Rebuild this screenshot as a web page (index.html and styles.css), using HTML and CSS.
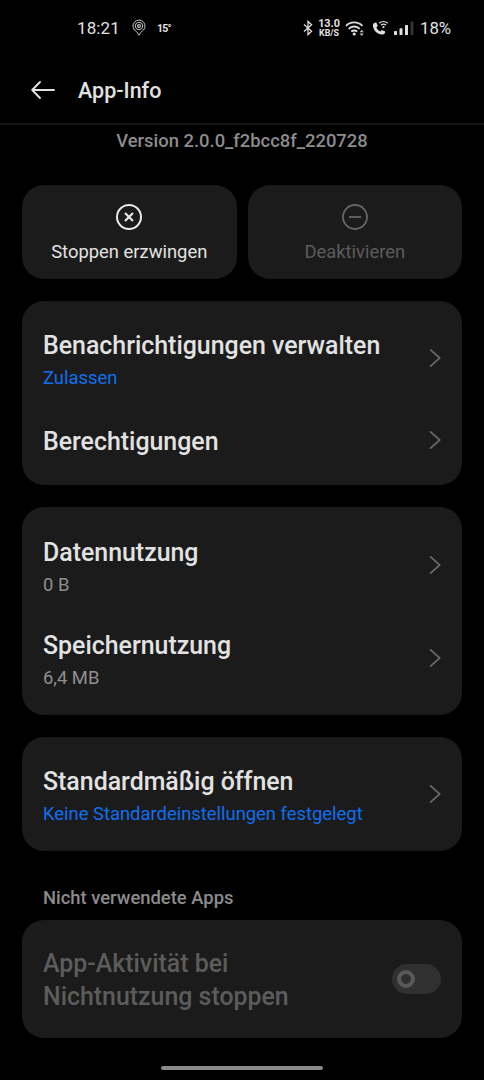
FILE: index.html
```
<!DOCTYPE html>
<html lang="de">
<head>
    <meta charset="UTF-8">
    <meta name="viewport" content="width=device-width, initial-scale=1.0">
    <title>App-Info</title>

    <link rel="stylesheet" href="styles.css">
</head>
<body>
    <div class="statusbar">
        <span class="time">18:21</span>
        <svg class="icon-location" width="14" height="18" viewBox="0 0 14 18" fill="none" stroke="#c4c4c4">
            <path d="M4.6 12.6A6 6 0 1 1 9.4 12.6L7 16.2Z" stroke-width="1"/>
            <circle cx="7" cy="7" r="3.7" stroke-width="1"/>
            <circle cx="7" cy="7" r="1.4" stroke-width="1.2"/>
        </svg>
        <span class="temp">15°</span>

        <div class="status-right">
            <svg class="icon-bt" width="10" height="16" viewBox="0 0 10 16" fill="none" stroke="#dedede" stroke-width="1.3">
                <path d="M1 4.5L8.6 11.3L5 14.6V1.4L8.6 4.7L1 11.5"/>
            </svg>
            <div class="speed">
                <span>13.0</span>
                <span class="unit">KB/S</span>
            </div>
            <svg class="icon-wifi" width="21" height="17" viewBox="0 0 21 17" fill="none" stroke="#dedede" stroke-width="1.9">
                <path d="M1 5.8A11.6 11.6 0 0 1 17.4 5.8"/>
                <path d="M3.7 8.8A7.8 7.8 0 0 1 14.7 8.8"/>
                <path d="M6.3 11.7A4.1 4.1 0 0 1 12.1 11.7"/>
                <circle cx="9.2" cy="14" r="1.6" fill="#dedede" stroke="none"/>
                <path d="M14.6 12.2L16.7 9.8L18.8 12.2ZM14.6 13.5L16.7 15.9L18.8 13.5Z" fill="#bdbdbd" stroke="none"/>
            </svg>
            <svg class="icon-call" width="17" height="16" viewBox="0 0 17 16">
                <path d="M1.4 3.6L3.6 2.5Q4.3 2.3 4.6 3L5.6 5.5Q5.8 6.2 5.2 6.7L4.3 7.5Q5.5 10.1 8.2 11.4L9.2 10.4Q9.7 9.9 10.4 10.2L12.8 11.3Q13.5 11.7 13.2 12.4Q12.2 14.8 9.6 14.6Q2.9 13.7 1 6.7Q.7 4.5 1.4 3.6Z" fill="#dedede"/>
                <g fill="none" stroke="#dedede" stroke-width="1.2">
                    <path d="M7.2 3.2A6.3 6.3 0 0 1 15.8 3.2"/>
                    <path d="M9 5.3A3.6 3.6 0 0 1 14 5.3"/>
                </g>
                <circle cx="11.5" cy="7.1" r="1.1" fill="#dedede"/>
            </svg>
            <svg class="icon-signal" width="20" height="14" viewBox="0 0 20 14" fill="#dedede">
                <rect x="0" y="10" width="3" height="4" rx=".6"/>
                <rect x="5.5" y="7.3" width="3" height="6.7" rx=".6"/>
                <rect x="11" y="4" width="3" height="10" rx=".6"/>
                <rect x="16.5" y=".5" width="3" height="13.5" rx=".6" fill="#333"/>
            </svg>
            <span class="battery">18%</span>
        </div>
    </div>

    <div class="header">
        <svg class="back" width="26" height="20" viewBox="0 0 26 20" fill="none" stroke="#e2e2e2" stroke-width="1.9" stroke-linecap="round" stroke-linejoin="round">
            <path d="M24 10H2.2M10 2L2.2 10L10 18"/>
        </svg>
        <h1>App-Info</h1>
    </div>

    <div class="version">Version 2.0.0_f2bcc8f_220728</div>

    <div class="buttons">
        <div class="button">
            <svg width="28" height="28" viewBox="0 0 28 28" fill="none" stroke="#e8e8e8" stroke-width="2">
                <circle cx="14" cy="14" r="12"/>
                <path d="M10 10L18 18M18 10L10 18" stroke-width="2.2"/>
            </svg>
            <span>Stoppen erzwingen</span>
        </div>
        <div class="button disabled">
            <svg width="28" height="28" viewBox="0 0 28 28" fill="none" stroke="#666" stroke-width="1.8">
                <circle cx="14" cy="14" r="12"/>
                <path d="M8 14H20"/>
            </svg>
            <span>Deaktivieren</span>
        </div>
    </div>

    <div class="card">
        <div class="row">
            <div class="text">
                <div class="title">Benachrichtigungen verwalten</div>
                <div class="sub blue">Zulassen</div>
            </div>
            <svg class="chevron" width="12" height="20" viewBox="0 0 12 20"><path d="M1.6 1.8L10.7 10L1.6 18.2"/></svg>
        </div>
        <div class="row small">
            <div class="text">
                <div class="title">Berechtigungen</div>
            </div>
            <svg class="chevron" width="12" height="20" viewBox="0 0 12 20"><path d="M1.6 1.8L10.7 10L1.6 18.2"/></svg>
        </div>
    </div>

    <div class="card">
        <div class="row">
            <div class="text">
                <div class="title">Datennutzung</div>
                <div class="sub">0 B</div>
            </div>
            <svg class="chevron" width="12" height="20" viewBox="0 0 12 20"><path d="M1.6 1.8L10.7 10L1.6 18.2"/></svg>
        </div>
        <div class="row">
            <div class="text">
                <div class="title">Speichernutzung</div>
                <div class="sub">6,4 MB</div>
            </div>
            <svg class="chevron" width="12" height="20" viewBox="0 0 12 20"><path d="M1.6 1.8L10.7 10L1.6 18.2"/></svg>
        </div>
    </div>

    <div class="card">
        <div class="row">
            <div class="text">
                <div class="title">Standardmäßig öffnen</div>
                <div class="sub blue">Keine Standardeinstellungen festgelegt</div>
            </div>
            <svg class="chevron" width="12" height="20" viewBox="0 0 12 20"><path d="M1.6 1.8L10.7 10L1.6 18.2"/></svg>
        </div>
    </div>

    <div class="section-label">Nicht verwendete Apps</div>

    <div class="card unused">
        <div class="row">
            <div class="title">App-Aktivität bei<br>Nichtnutzung stoppen</div>
            <div class="toggle"><div class="knob"></div></div>
        </div>
    </div>

    <div class="navbar"></div>
</body>
</html>
```
FILE: styles.css
```
*{
    box-sizing: border-box;
}

body{
    margin: 0;
    height: 1080px;
    overflow: hidden;
    background-color: black;
    color: #e2e2e2;
    font-family: Roboto, "Liberation Sans", sans-serif;
}

svg{
    display: block;
    flex: none;
}

.statusbar{
    display: flex;
    align-items: center;
    height: 56px;
    padding: 0 33px 0 77px;
}

.time{
    font-size: 17px;
    font-weight: 400;
    letter-spacing: 0.1px;
    width: 55px;
}

.temp{
    margin-left: 11px;
    font-size: 10.5px;
    font-weight: 700;
    letter-spacing: -0.8px;
}

.status-right{
    display: flex;
    align-items: center;
    margin-left: auto;
}

.speed{
    display: flex;
    flex-direction: column;
    align-items: center;
    width: 22px;
    margin: 0 5px 0 5px;
    font-size: 10.8px;
    font-weight: 700;
    line-height: 9px;
}

.speed .unit{
    font-size: 8.8px;
    line-height: 10px;
}

.icon-call{
    margin-left: 6px;
}

.icon-signal{
    margin-left: 5px;
}

.battery{
    width: 31px;
    margin-left: 6px;
    font-size: 16.8px;
}

.header{
    display: flex;
    align-items: center;
    height: 69px;
    padding: 1px 30px 0;
    border-bottom: 2px solid #161616;
}

.header h1{
    margin: 0 0 0 22px;
    font-size: 21.5px;
    font-weight: 500;
}

.version{
    height: 60px;
    padding-top: 5px;
    text-align: center;
    font-size: 18.4px;
    font-weight: 500;
    line-height: 22px;
    color: #8c8c8c;
}

.buttons{
    display: flex;
    gap: 11px;
    margin: 0 22px;
}

.button{
    display: flex;
    flex: 1;
    flex-direction: column;
    align-items: center;
    height: 94px;
    padding-top: 18px;
    border-radius: 22px;
    background-color: #1b1b1b;
    font-size: 18.4px;
    line-height: 22px;
}

.button span{
    margin-top: 10px;
}

.disabled{
    color: #5c5c5c;
}

.card{
    margin: 21.7px 22px 0;
    padding: 10.5px 21px;
    border-radius: 22px;
    background-color: #1b1b1b;
}

.row{
    display: flex;
    align-items: center;
    justify-content: space-between;
    height: 93.5px;
}

.small{
    height: 70px;
}

.text{
    padding-top: 2px;
}

.title{
    padding-top: 1px;
    font-size: 24.9px;
    font-weight: 500;
    line-height: 33px;
}

.sub{
    margin-top: 5px;
    font-size: 18.4px;
    line-height: 22px;
    color: #8f8f8f;
}

.blue{
    color: #0f6ff0;
}

.chevron{
    margin-top: 1px;
    fill: none;
    stroke: #686868;
    stroke-width: 1.7;
    stroke-linecap: round;
    stroke-linejoin: round;
}

.section-label{
    margin: 36px 43px 0;
    font-size: 18.4px;
    font-weight: 500;
    line-height: 22px;
    color: #8c8c8c;
}

.unused{
    margin-top: 11px;
    padding: 0 21px;
    color: #5c5c5c;
}

.unused .row{
    height: 118px;
}

.unused .title{
    padding-top: 2px;
}

.toggle{
    width: 49px;
    height: 30px;
    padding: 6px 5px;
    border-radius: 15px;
    background-color: #303030;
}

.knob{
    width: 18px;
    height: 18px;
    border: 4px solid #595959;
    border-radius: 50%;
}

.navbar{
    width: 162px;
    height: 4px;
    margin: 28px auto 0;
    border-radius: 2px;
    background-color: #8a8a8a;
}
```
